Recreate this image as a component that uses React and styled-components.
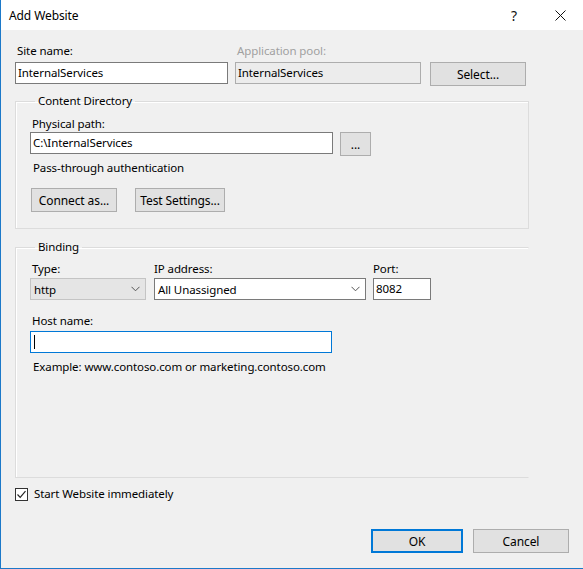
import styled, { createGlobalStyle } from "styled-components";

const Global = createGlobalStyle`
  html, body {
    margin: 0;
    padding: 0;
    background: #f0f0f0;
  }
  * {
    box-sizing: border-box;
  }
`;

const Window = styled.div`
  width: 583px;
  height: 569px;
  display: flex;
  flex-direction: column;
  background: #f0f0f0;
  border-left: 1px solid #1c79c9;
  border-bottom: 1px solid #1c79c9;
  font-family: "Noto Sans", "Open Sans", sans-serif;
  font-size: 11.5px;
  letter-spacing: -0.1px;
  color: #000;
`;

const TitleBar = styled.div`
  height: 30px;
  flex: none;
  display: flex;
  align-items: center;
  background: #fff;
  padding-left: 8px;
`;

const Title = styled.div`
  flex: 1;
  font-size: 12px;
`;

const TitleButton = styled.div`
  width: 46px;
  height: 30px;
  display: flex;
  align-items: center;
  justify-content: center;
  font-size: 14px;
  color: #111;
`;

const Body = styled.div`
  flex: 1;
  display: flex;
  flex-direction: column;
  padding: 13px 14px 15px 14px;
`;

const Row = styled.div`
  display: flex;
  align-items: flex-start;
  gap: ${(p) => p.gap || 0}px;
`;

const Field = styled.div`
  display: flex;
  flex-direction: column;
  width: ${(p) => p.width}px;
`;

const Label = styled.div`
  line-height: 16px;
  height: 16px;
  padding-left: ${(p) => (p.indent !== undefined ? p.indent : 2)}px;
  margin-bottom: ${(p) => (p.mb !== undefined ? p.mb : 3)}px;
  white-space: nowrap;
  color: ${(p) => (p.disabled ? "#a0a0a0" : "#000")};
`;

const Text = styled.div`
  line-height: 16px;
  padding-left: 3px;
  margin-top: ${(p) => p.top || 0}px;
`;

const Input = styled.div`
  height: 22px;
  width: ${(p) => (p.width ? `${p.width}px` : "100%")};
  border: 1px solid ${(p) => (p.focused ? "#0078d7" : p.disabled ? "#adadad" : "#7a7a7a")};
  background: ${(p) => (p.disabled ? "#ececec" : "#fff")};
  display: flex;
  align-items: center;
  padding-left: 2px;
  line-height: 16px;
  white-space: nowrap;
`;

const Caret = styled.span`
  display: inline-block;
  width: 1px;
  height: 14px;
  background: #000;
  margin-left: 1px;
`;

const Combo = styled.div`
  height: 22px;
  width: 100%;
  border: 1px solid ${(p) => (p.readonly ? "#c4c4c4" : "#7a7a7a")};
  background: ${(p) => (p.readonly ? "#e5e5e5" : "#fff")};
  display: flex;
  align-items: center;
  justify-content: space-between;
  padding: 0 5px 0 3px;
`;

const Button = styled.button`
  height: 24px;
  width: ${(p) => p.width}px;
  margin-left: ${(p) => p.left || 0}px;
  margin-top: ${(p) => p.top || 0}px;
  background: #e1e1e1;
  border: ${(p) => (p.primary ? "2px solid #0078d7" : "1px solid #adadad")};
  font-family: inherit;
  font-size: 12px;
  letter-spacing: -0.1px;
  color: #000;
  padding: 0;
  flex: none;
`;

const Group = styled.fieldset`
  margin: ${(p) => p.top}px 0 0 0;
  width: 514px;
  height: ${(p) => (p.height ? `${p.height}px` : "auto")};
  border: 1px solid #dcdcdc;
  border-right-color: ${(p) => (p.openRight ? "transparent" : "#dcdcdc")};
  box-shadow: inset 1px 1px 0 #fff;
  padding: ${(p) => p.pad || "7px 14px 16px 14px"};
`;

const Legend = styled.legend`
  padding: 0 3px;
  margin-left: 5px;
  line-height: 16px;
`;

const CheckRow = styled.label`
  display: flex;
  align-items: center;
  gap: 6px;
  margin-top: 8px;
  line-height: 16px;
`;

const Box = styled.span`
  width: 13px;
  height: 13px;
  border: 1px solid #333;
  background: #fff;
  display: flex;
  align-items: center;
  justify-content: center;
`;

const Footer = styled.div`
  margin-top: auto;
  display: flex;
  justify-content: flex-end;
  gap: 10px;
`;

const Chevron = () => (
  <svg width="9" height="6" viewBox="0 0 9 6">
    <path d="M0.5 0.8 L4.5 4.8 L8.5 0.8" fill="none" stroke="#555" strokeWidth="1" />
  </svg>
);

export default function App() {
  return (
    <>
      <Global />
      <Window>
        <TitleBar>
          <Title>Add Website</Title>
          <TitleButton>?</TitleButton>
          <TitleButton>
            <svg width="11" height="11" viewBox="0 0 11 11">
              <path d="M0.5 0.5 L10.5 10.5 M10.5 0.5 L0.5 10.5" stroke="#111" strokeWidth="1" />
            </svg>
          </TitleButton>
        </TitleBar>
        <Body>
          <Row>
            <Field width={213}>
              <Label>Site name:</Label>
              <Input>InternalServices</Input>
            </Field>
            <Field width={186} style={{ marginLeft: 7 }}>
              <Label disabled>Application pool:</Label>
              <Input disabled>InternalServices</Input>
            </Field>
            <Button width={96} left={9} top={19}>Select...</Button>
          </Row>

          <Group top={7} pad="7px 14px 16px 14px">
            <Legend>Content Directory</Legend>
            <Field width={345}>
              <Label mb={0}>Physical path:</Label>
              <Row>
                <Input width={303}>C:\InternalServices</Input>
                <Button width={31} left={7}>...</Button>
              </Row>
            </Field>
            <Text top={4}>Pass-through authentication</Text>
            <Row gap={18} style={{ marginTop: 12 }}>
              <Button width={86} left={1}>Connect as...</Button>
              <Button width={90}>Test Settings...</Button>
            </Row>
          </Group>

          <Group top={10} height={239} pad="6px 14px 16px 14px" openRight>
            <Legend>Binding</Legend>
            <Row>
              <Field width={116}>
                <Label mb={1}>Type:</Label>
                <Combo readonly>
                  <span>http</span>
                  <Chevron />
                </Combo>
              </Field>
              <Field width={212} style={{ marginLeft: 8 }}>
                <Label mb={1} indent={0}>IP address:</Label>
                <Combo>
                  <span>All Unassigned</span>
                  <Chevron />
                </Combo>
              </Field>
              <Field width={58} style={{ marginLeft: 7 }}>
                <Label mb={1} indent={0}>Port:</Label>
                <Input>8082</Input>
              </Field>
            </Row>
            <Field width={302} style={{ marginTop: 13 }}>
              <Label mb={2}>Host name:</Label>
              <Input focused>
                <Caret />
              </Input>
            </Field>
            <Text top={6}>Example: www.contoso.com or marketing.contoso.com</Text>
          </Group>

          <CheckRow>
            <Box>
              <svg width="11" height="11" viewBox="0 0 11 11">
                <path d="M1.5 5.5 L4.2 8.3 L9.5 2.2" fill="none" stroke="#222" strokeWidth="1.2" />
              </svg>
            </Box>
            Start Website immediately
          </CheckRow>

          <Footer>
            <Button width={92} primary>OK</Button>
            <Button width={96}>Cancel</Button>
          </Footer>
        </Body>
      </Window>
    </>
  );
}
